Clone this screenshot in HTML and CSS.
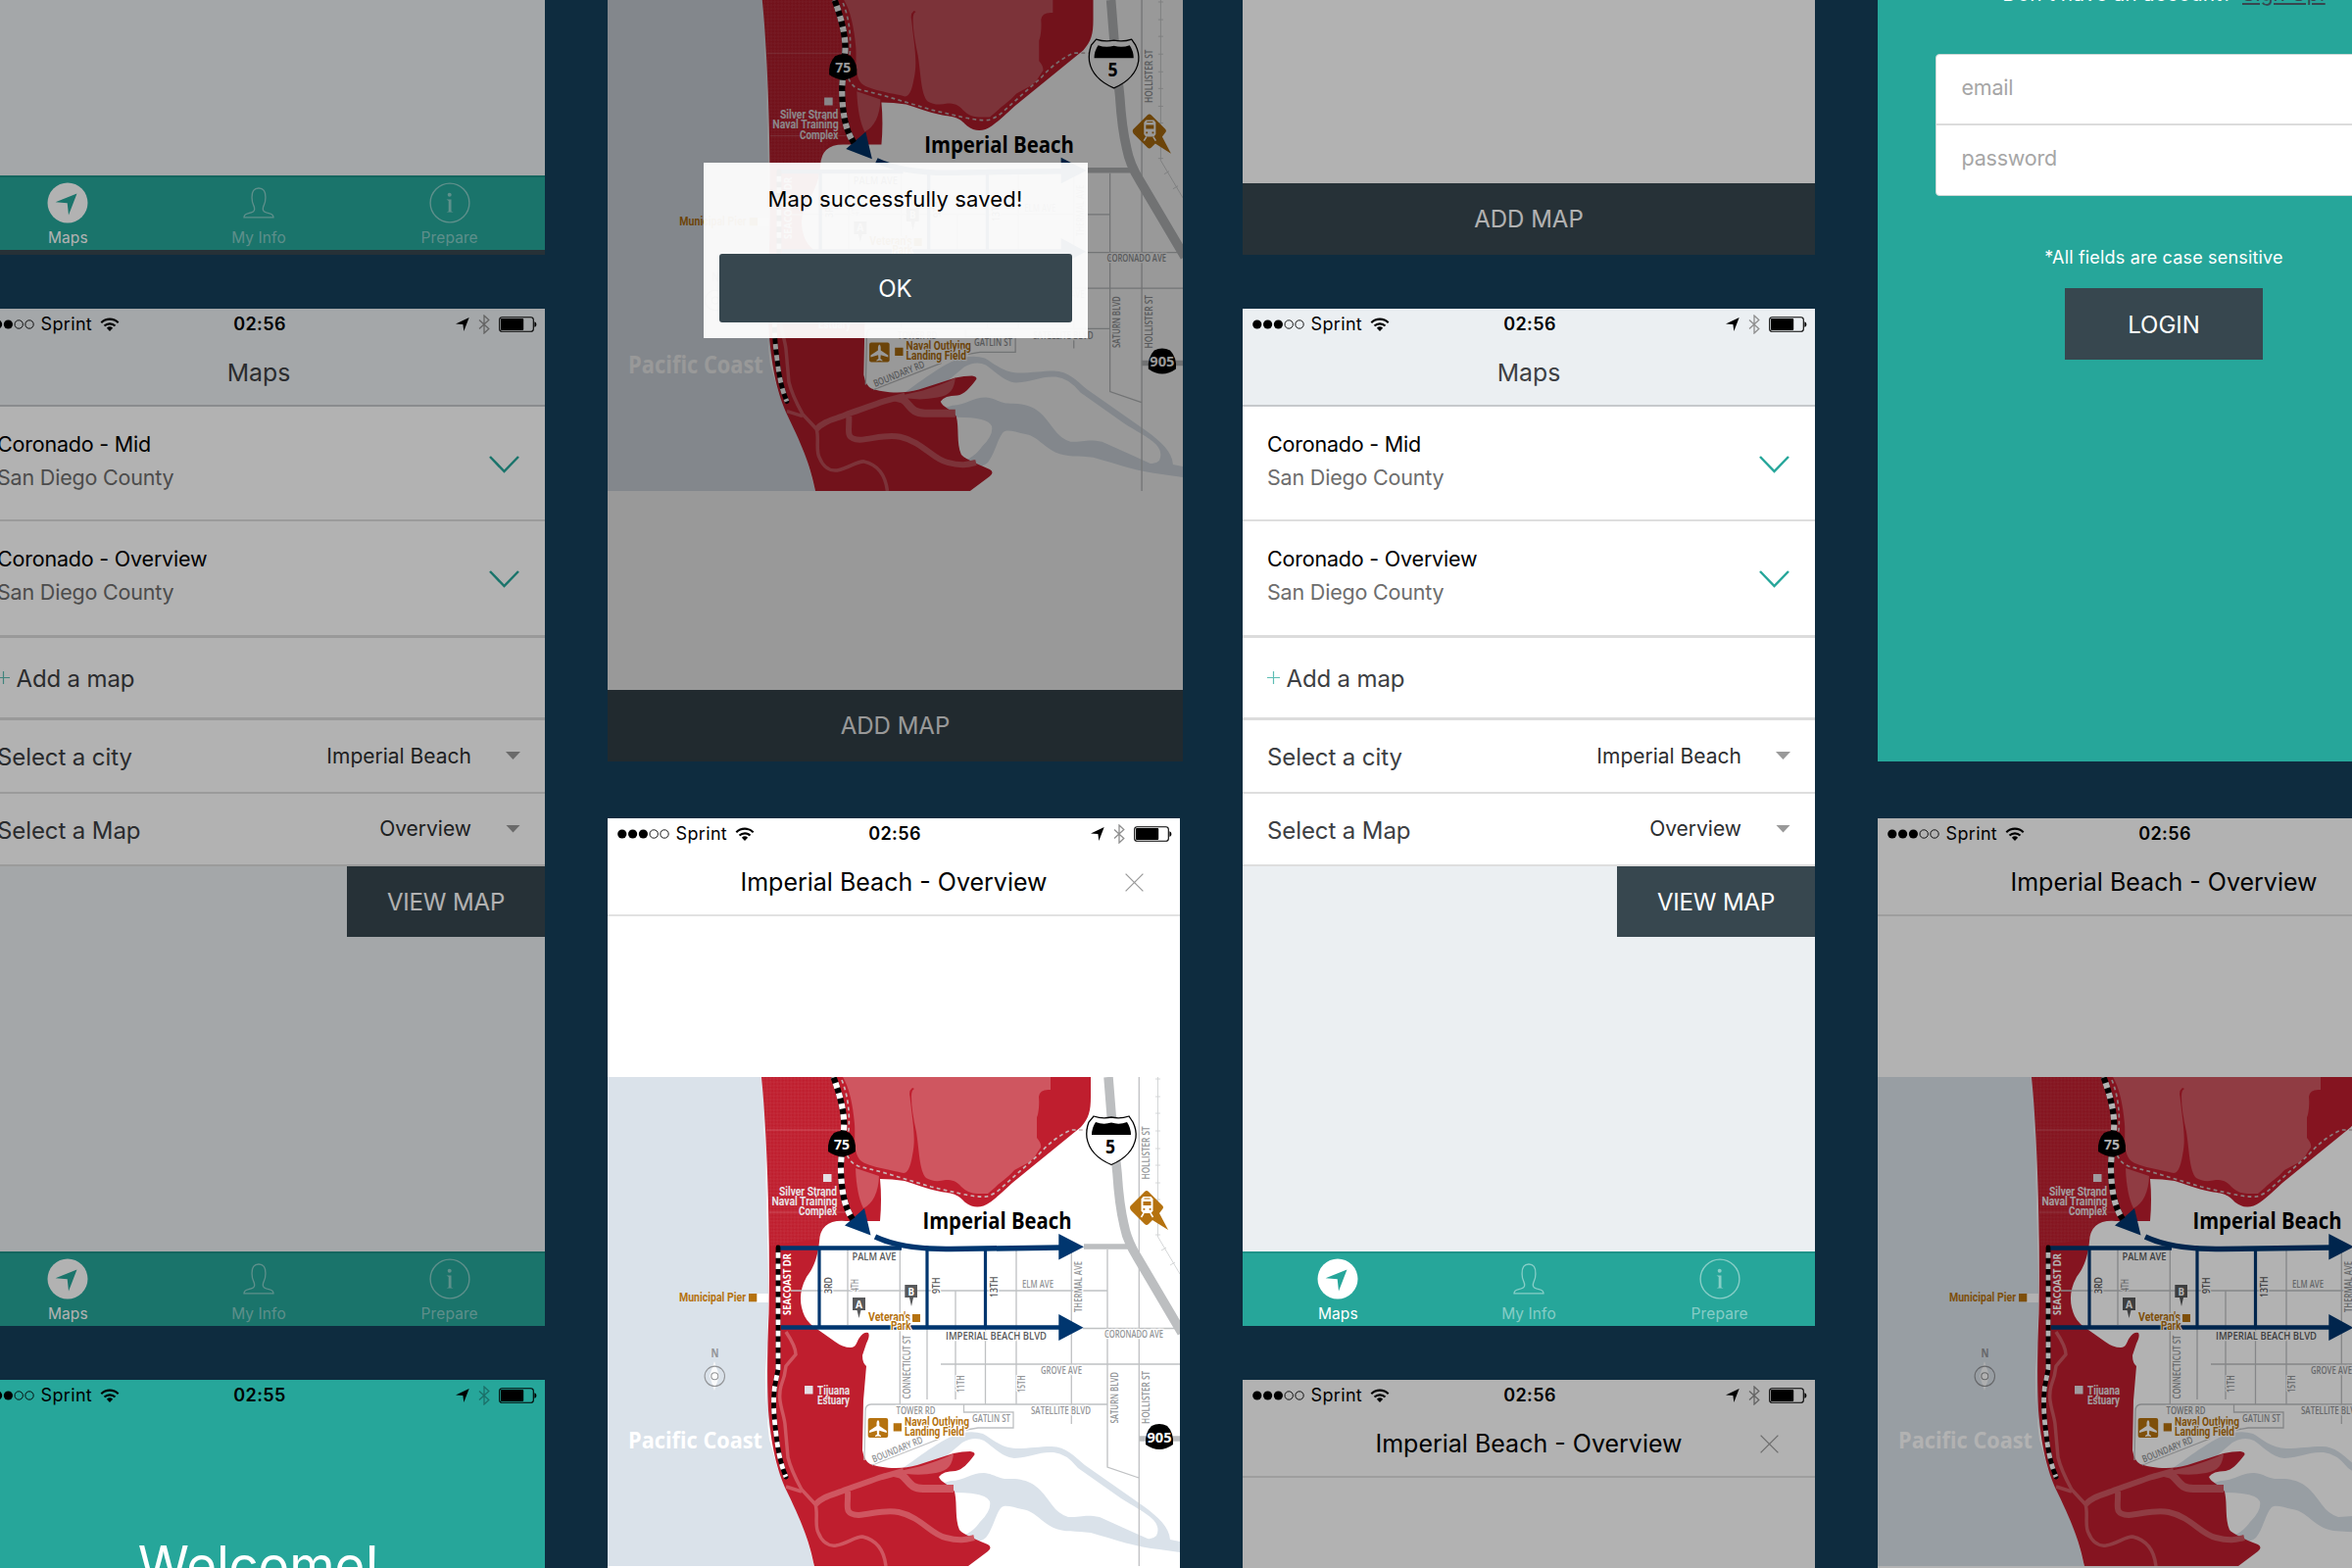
FILE: index.html
```html
<!DOCTYPE html>
<html lang="en">
<head>
<meta charset="utf-8">
<title>Beach Maps – screens</title>
<link rel="stylesheet" href="styles.css">
</head>
<body>
<svg class="defs" width="0" height="0" aria-hidden="true">
  <defs>
    <pattern id="hatch" width="5" height="5" patternUnits="userSpaceOnUse" patternTransform="rotate(45)"><rect width="2.5" height="2.5" fill="#fff" opacity=".06"/><rect x="2.5" y="2.5" width="2.5" height="2.5" fill="#fff" opacity=".06"/></pattern>
    <symbol id="i-dots" viewBox="0 0 54 10"><circle cx="4.8" cy="5" r="4.6"/><circle cx="15.6" cy="5" r="4.6"/><circle cx="26.4" cy="5" r="4.6"/><g fill="none" stroke="currentColor" stroke-width=".9"><circle cx="37.2" cy="5" r="4.2"/><circle cx="48" cy="5" r="4.2"/></g></symbol>
    <symbol id="i-wifi" viewBox="0 0 19 14"><g fill="none" stroke="currentColor" stroke-width="2.1"><path d="M.8 5.2a12.4 12.4 0 0 1 17.4 0"/><path d="M4 8.6a7.9 7.9 0 0 1 11 0"/></g><path d="M6.4 10.8a4.5 4.5 0 0 1 6.2 0L9.5 14z"/></symbol>
    <symbol id="i-arrow" viewBox="0 0 14 14"><path d="M13.7 0 8.3 14 7.4 6.9 0 6.5z"/></symbol>
    <symbol id="i-bt" viewBox="0 0 12 20"><path d="M1 5.6 10.8 14.4 6 19V1l4.800 4.600L1 14.400" fill="none" stroke="currentColor" stroke-width="1.3"/></symbol>
    <symbol id="i-batt" viewBox="0 0 39 16"><rect x=".7" y=".7" width="34.6" height="14.6" rx="2.6" fill="none" stroke="currentColor" stroke-width="1.1"/><rect x="2" y="2" width="23.2" height="12" rx="1"/><path d="M36.4 5.2c2.6.6 2.6 5 0 5.6z"/></symbol>
    <symbol id="i-chev" viewBox="0 0 31 18"><path d="M1 1 15.5 16 30 1" fill="none" stroke="#26a69a" stroke-width="2.5"/></symbol>
    <symbol id="i-plus" viewBox="0 0 13 13"><path d="M0 6.500h13M6.500 0v13" stroke="#5dbdb4" stroke-width="1.2"/></symbol>
    <symbol id="i-close" viewBox="0 0 19 19"><path d="M.6.6l17.8 17.8M18.400.6.6 18.400" stroke="#9b9b9b" stroke-width="1.3"/></symbol>
    <symbol id="i-maps" viewBox="0 0 42 42"><circle cx="21" cy="21" r="20.5" fill="#fff"/><path d="M30.5 11.5 22 33.5 20.7 21.3 8.6 20.2z" fill="#26a69a"/></symbol>
    <symbol id="i-user" viewBox="0 0 32 32"><path d="M1 30.8c.1-2.500 1.400-3.600 4.600-4.200 3.700-.7 5.600-1.600 6-3.500.2-1.800 0-3-.8-4.500-1.200-2.200-1.700-4.400-1.700-7.600C8.800 4.200 11.300 1 16 1s7.200 3.200 6.900 10c0 3.200-.5 5.400-1.700 7.600-.8 1.500-1 2.700-.8 4.500.4 1.900 2.300 2.800 6 3.500 3.200.6 4.500 1.700 4.600 4.200z" fill="none" stroke="currentColor" stroke-width="1.3"/></symbol>
    <symbol id="i-info" viewBox="0 0 42 42"><circle cx="21" cy="21" r="19.9" fill="none" stroke="currentColor" stroke-width="1.4"/><circle cx="20.7" cy="12.8" r="2"/><path d="M17.5 17.500h5v12l2.100 1h-7l2.100-1V19z"/></symbol>

    <symbol id="map" viewBox="0 0 584 499" preserveAspectRatio="none">
      <rect width="584" height="499" fill="#fff"/>
      <path fill="#dae2ea" d="M0 0h160L165 204V328L211 499H0z"/>
      <path fill="#fff" d="M155 0C161 54 163 124 165 204V241L161 300Q160 345 169 375L175 404 165 370Q161 340 162 300L164 241V204L162 124 160 54z"/>
      <path fill="#fff" d="M152 221h14v9h-14z"/>
      <path fill="#dae2ea" d="M300 400C320 386 345 366 363 363Q374 361 383 364C392 369 402 379 417 379C432 379 440 377 453 377C468 377 476 387 487 396L547 438C562 449 573 459 574 472L584 474V485L563 482C540 480 518 472 493 465C478 463 466 465 455 460C440 452 436 443 423 441C414 439 406 436 402 439C396 445 393 462 386 470Q378 477 363 473L355 470C368 468 376 460 380 454Q392 442 390 433Q386 424 355 424L330 418 350 412C364 412 370 404 384 404C396 405 398 411 412 410C436 410 444 424 453 436Q460 446 470 449C484 449 488 446 502 449L533 463 551 471Q556 472 560 468Q564 460 557 452C548 443 536 438 524 430L480 399Q468 384 455 383C440 382 432 388 415 389C402 388 392 376 384 371Q374 366 362 373L330 400z"/>
      <path fill="#bf1e2e" d="M157 0H493V20C493 35 491 42 483 51L413 108Q396 124 390 128Q377 137 365 128C358 121 356 119 340 117C325 114 313 109 303 106Q290 104 278 104Q280 125 278 147H243Q217 145 216 168C214 190 206 200 203 204Q192 224 201 244Q205 252 215 258L232 270Q240 276 248 276C254 276 254 270 257 266Q261 260 266 261Q268 264 264 272L260 284Q260 292 264 295L261 330 260 381Q262 392 268 395C278 399 300 401 316 396L353 384Q362 382 370 382Q376 383 374 386C368 394 362 401 355 402Q342 402 338 408C340 414 350 416 354 423C357 435 354 450 359 462Q361 466 388 477Q393 480 388 484L368 499H211C206 475 200 458 183 423C172 400 167 375 164 340Q162 300 164.500 241C166 160 163 60 157 0z"/>
      <path fill="url(#hatch)" d="M157 0H233L240 50 238 84 243 130 222 149 216 165 166 172 163 90z"/>
      <g fill="#cf5660">
        <path d="M240 0H452V13Q441 12 440 20C441 30 439 40 438 41L438 62Q443 68 442 72C436 80 436 83 430 87L415 95C407 104 402 106 395 113L388 119H377Q368 119 361 112C356 106 352 105 345 105Q333 108 325 103C318 96 318 74 315 56Q310 34 310 20 310 13 313 12L311 11Q307 14 308.500 20C311 45 315 62 311 80Q308 98 302 98C290 95 262 91 257 84C250 74 253 60 252 48Q249 15 240 0z"/>
        <path d="M253 93 277 101Q276 126 261 134Q254 120 253 93z"/>
        <path d="M280 405Q300 402 320 397 345 389 353 384C352 395 348 402 335 404Q320 407 305 405L300 410z"/>
      </g>
      <g fill="none" stroke="#cf5660" stroke-width="3.5">
        <path d="M182 260Q192 275 192 283L182 295Q181 305 177 315C173 330 179 340 181 354L184 388Q187 401 198 421L212 436C215 445 211 458 215 465 219 475 226 479 233 478 245 476 252 469 260 469 273 472 282 482 284 499"/>
        <path d="M182 418 198 423"/>
        <path stroke-width="6" d="M211 437C220 427 232 426 243 421 258 416 268 412 280 408L302 402"/>
        <path stroke-width="8" d="M300 406C308 412 308 420 322 420H353"/>
        <path stroke-width="6" d="M245 423C246 438 240 446 256 447 270 446 283 441 297 444 320 449 330 467 345 470 360 474 366 472 374 470"/>
      </g>
      <path d="M162 54h76M165 138h77" stroke="#fff" stroke-width=".8" opacity=".25"/>
      <path fill="none" stroke="#c9b6b8" stroke-width="1.7" stroke-dasharray="3.8 3.3" d="M239 3Q248 26 246 54L243 76Q247 88 256 91L280 97 330 112 360 119Q378 123 387 122 396 119 402 113L440 79Q455 62 473 54H490"/>
      <!-- street grid -->
      <g fill="none" stroke="#bfc1c3" stroke-width="1.3">
        <path d="M542.300 0V499M510 176V398L542 409M473.300 176V354M187 218H510M245 176V253M298.300 176V334M355 218V329M417 176V334M326 256V329M385.500 256V334M340 293H584M485 256.500H584M510 334H269Q263 334 263 341L262 391M363.500 334V342H414V358H378L366 360M339 369 270 396"/>
        <path d="M561.500 0V163L584 201M559 2h5M559 20h5M559 37h5M559 55h5M559 73h5M559 90h5M559 108h5M559 125h5M559 161h5M565 177l5-3M574 192l5-3" stroke-width=".9" stroke="#cfd1d3"/>
      </g>
      <path d="M486 173H532M542 369H584" stroke="#bcbec0" stroke-width="5.5"/>
      <path d="M511 0 515 50 520 98Q522 130 527 151 530 167 540 183L586 261" fill="none" stroke="#bcbec0" stroke-width="9.5"/>
      <!-- highlighted route -->
      <g fill="none" stroke="#00366f">
        <path d="M216 176V256M326 176V256M385.500 176V256" stroke-width="3.2"/>
        <path d="M176 174.500H300M177 255.500H464" stroke-width="4.3"/>
        <path d="M273 163C290 171 315 176 350 175.500L462 174" stroke-width="5.5"/>
      </g>
      <path fill="#00366f" d="M262 134 268.500 161.500 242 151.500zM460.300 160 486 173.300 460.300 186.500zM460.300 242 485.500 255.700 460.300 269z"/>
      <g fill="none">
        <path d="M230.500 0Q245 40 240 60L238 90Q238 128 250 145" stroke="#000" stroke-width="6.2"/>
        <path d="M230.500 0Q245 40 240 60L238 90Q238 128 250 145" stroke="#fff" stroke-width="6.2" stroke-dasharray="5.5 5.5" stroke-dashoffset="-6"/>
        <path d="M174 174V298L170.500 316Q168 335 172 365 175 392 182 408" stroke="#000" stroke-width="4.8" stroke-linecap="round"/>
        <path d="M174 174V298L170.500 316Q168 335 172 365 175 392 182 408" stroke="#fff" stroke-width="4.8" stroke-dasharray="5.7 5.7" stroke-dashoffset="-5"/>
      </g>
      <!-- highway shields -->
      <path d="M231 57Q239 53 247 57 254 64 253 76 246 81 239 81 232 81 225 76 224 64 231 57z"/>
      <path d="M555 356Q563 352 571 356 578 363 577 375 570 380 563 380 556 380 549 375 548 363 555 356z"/>
      <path d="M496 40Q505 43 514 41 523 43 532 40L536 46Q540 54 539 62 536 80 514 89.500 492 80 489 62 488 54 491 46z" fill="#fff" stroke="#000" stroke-width="1.3"/>
      <path d="M498 46Q506 49 514 46.500 522 49 530 46 534 52 534 59H494Q494 52 498 46z"/>
      <!-- landmarks -->
      <path fill="#e5dfe4" d="M220 99h8.500v8h-8.500zM201 315h8.500v8.500h-8.500z"/>
      <path fill="#b5720f" d="M144 221h8.300v8.300H144zM311 242h8v8h-8zM291.700 353.300h8.300v8.300h-8.300z"/>
      <path fill="#b5720f" d="M548 117q2-2 4 0l14 14q2 2 0 4l-3 4 9 17-16-10-4 4q-2 2-4 0l-14-14q-2-3 0-5z"/>
      <path fill="#fff" d="M546.500 122h8l2 2.500v12l-2 2.500h-8l-2-2.500v-12z"/><path fill="#b5720f" d="M546.500 127h8v4h-8zM546.500 134h1.800v1.800h-1.800zM552.700 134h1.800v1.800h-1.800zM547.500 123.500h6v1h-6z"/><path d="M547 139l-2.500 4M554 139l2.500 4" stroke="#fff" stroke-width="1.6"/>
      <rect x="265.7" y="348" width="20.5" height="20" rx="2" fill="#b5720f"/>
      <path fill="#fff" d="M276 350q1.300 1 1.300 3v3l7.500 5v2l-7.500-2.300-.3 3.800 2 1.600v1l-3-.7-3 .7v-1l2-1.600-.3-3.800L267 363v-2l7.500-5v-3q0-2 1.500-3z"/>
      <path fill="#58595b" d="M250 225h13v13h-4.500L256.500 246l-2-8H250zM303.300 212h12.700v13h-4L310 234l-2-9h-4.700z"/>
      <path fill="#fff" d="M109 290l5 15-5 15-5-15z" opacity=".85"/>
      <g fill="none" stroke="#939598" stroke-width="1.1"><circle cx="109.3" cy="305.3" r="10.2"/><circle cx="109.3" cy="305.3" r="3.5" fill="#fff"/></g>
      <g class="m-bold m-white" font-size="12">
        <text x="231" y="74" textLength="16" lengthAdjust="spacingAndGlyphs" font-size="14">75</text>
        <text x="550.5" y="373" textLength="25" lengthAdjust="spacingAndGlyphs" font-size="13.5">905</text>
        <text x="21" y="379" textLength="137" lengthAdjust="spacingAndGlyphs" font-size="24">Pacific Coast</text>
        <text transform="translate(187 243)rotate(-90)" textLength="63" lengthAdjust="spacingAndGlyphs" font-size="10.5">SEACOAST DR</text>
        <text x="253" y="235.5" textLength="7" lengthAdjust="spacingAndGlyphs" font-size="10">A</text>
        <text x="306.5" y="222.5" textLength="6.5" lengthAdjust="spacingAndGlyphs" font-size="10">B</text>
      </g>
      <g class="m-din" fill="#e8e2e6" font-size="12">
        <text x="175" y="120.5" textLength="59" lengthAdjust="spacingAndGlyphs">Silver Strand</text>
        <text x="167.5" y="130.8" textLength="67" lengthAdjust="spacingAndGlyphs">Naval Training</text>
        <text x="195" y="141" textLength="39" lengthAdjust="spacingAndGlyphs">Complex</text>
        <text x="214" y="323.5" textLength="33" lengthAdjust="spacingAndGlyphs">Tijuana</text>
        <text x="214" y="333.8" textLength="33" lengthAdjust="spacingAndGlyphs">Estuary</text>
      </g>
      <g class="m-din m-halo" fill="#b5720f" font-size="12">
        <text x="73" y="229" textLength="68" lengthAdjust="spacingAndGlyphs" stroke="none" class="m-plain">Municipal Pier</text>
        <text x="266" y="248.7" textLength="43" lengthAdjust="spacingAndGlyphs">Veteran's</text>
        <text x="289" y="258" textLength="20.5" lengthAdjust="spacingAndGlyphs">Park</text>
        <text x="303" y="355.7" textLength="66" lengthAdjust="spacingAndGlyphs">Naval Outlying</text>
        <text x="303" y="366" textLength="61" lengthAdjust="spacingAndGlyphs">Landing Field</text>
      </g>
      <g class="m-bold">
        <text x="321.5" y="155" textLength="152" lengthAdjust="spacingAndGlyphs" font-size="22.5">Imperial Beach</text>
        <text x="508" y="77.8" textLength="10" lengthAdjust="spacingAndGlyphs" font-size="19">5</text>
      </g>
      <g class="m-street m-halo" fill="#58595b" font-size="10.5">
        <text x="249.5" y="187" textLength="45" lengthAdjust="spacingAndGlyphs">PALM AVE</text>
        <text x="345" y="268" textLength="103" lengthAdjust="spacingAndGlyphs">IMPERIAL BEACH BLVD</text>
        <text transform="translate(228.700 221)rotate(-90)" textLength="17" lengthAdjust="spacingAndGlyphs">3RD</text>
        <text transform="translate(338.500 221)rotate(-90)" textLength="16.5" lengthAdjust="spacingAndGlyphs">9TH</text>
        <text transform="translate(398 225)rotate(-90)" textLength="21.5" lengthAdjust="spacingAndGlyphs">13TH</text>
      </g>
      <g class="m-street m-halo" fill="#939598" font-size="10">
        <text transform="translate(255.500 219)rotate(-90)" textLength="13" lengthAdjust="spacingAndGlyphs">4TH</text>
        <text x="423" y="214.7" textLength="32" lengthAdjust="spacingAndGlyphs">ELM AVE</text>
        <text x="507" y="266.3" textLength="60" lengthAdjust="spacingAndGlyphs">CORONADO AVE</text>
        <text x="442" y="302.5" textLength="42" lengthAdjust="spacingAndGlyphs">GROVE AVE</text>
        <text x="294.5" y="344.3" textLength="40" lengthAdjust="spacingAndGlyphs">TOWER RD</text>
        <text x="432" y="344.3" textLength="61" lengthAdjust="spacingAndGlyphs">SATELLITE BLVD</text>
        <text x="372" y="352" textLength="39" lengthAdjust="spacingAndGlyphs">GATLIN ST</text>
        <text transform="translate(484 240)rotate(-90)" textLength="52" lengthAdjust="spacingAndGlyphs">THERMAL AVE</text>
        <text transform="translate(553.300 104.500)rotate(-90)" textLength="54" lengthAdjust="spacingAndGlyphs">HOLLISTER ST</text>
        <text transform="translate(553.300 354)rotate(-90)" textLength="54" lengthAdjust="spacingAndGlyphs">HOLLISTER ST</text>
        <text transform="translate(520.700 353.500)rotate(-90)" textLength="52.5" lengthAdjust="spacingAndGlyphs">SATURN BLVD</text>
        <text transform="translate(309.300 328.500)rotate(-90)" textLength="65" lengthAdjust="spacingAndGlyphs">CONNECTICUT ST</text>
        <text transform="translate(364 322)rotate(-90)" textLength="17.5" lengthAdjust="spacingAndGlyphs">11TH</text>
        <text transform="translate(426.300 322)rotate(-90)" textLength="17.5" lengthAdjust="spacingAndGlyphs">15TH</text>
        <text transform="translate(271.500 393.500)rotate(-22)" textLength="55" lengthAdjust="spacingAndGlyphs">BOUNDARY RD</text>
      </g>
      <text class="m-bold" x="105.5" y="285.7" font-size="11.5" fill="#939598" textLength="8" lengthAdjust="spacingAndGlyphs">N</text>
    </symbol>
  </defs>
</svg>

<main class="board">
  <section class="column">
    <article class="screen dim peek peek-tabs">
      <nav class="tabs">
        <a class="tab active"><svg class="tab-icon"><use href="#i-maps"/></svg><span>Maps</span></a>
        <a class="tab"><svg class="tab-icon user"><use href="#i-user"/></svg><span>My Info</span></a>
        <a class="tab"><svg class="tab-icon"><use href="#i-info"/></svg><span>Prepare</span></a>
      </nav>
    </article>
    <article class="screen full maps dim">
      <div class="status"><div class="st-left"><svg class="dots"><use href="#i-dots"/></svg><span class="carrier">Sprint</span><svg class="wifi"><use href="#i-wifi"/></svg></div><b class="clock">02:56</b><div class="st-right"><svg class="loc"><use href="#i-arrow"/></svg><svg class="bt"><use href="#i-bt"/></svg><svg class="batt"><use href="#i-batt"/></svg></div></div>
      <header class="nav-title">Maps</header>
      <div class="map-row"><div><h3>Coronado - Mid</h3><p>San Diego County</p></div><svg class="chev"><use href="#i-chev"/></svg></div>
      <div class="map-row last"><div><h3>Coronado - Overview</h3><p>San Diego County</p></div><svg class="chev"><use href="#i-chev"/></svg></div>
      <div class="add-row"><svg class="plus"><use href="#i-plus"/></svg><span>Add a map</span></div>
      <div class="select-row"><label>Select a city</label><span class="value">Imperial Beach</span><i class="caret"></i></div>
      <div class="select-row second"><label>Select a Map</label><span class="value">Overview</span><i class="caret"></i></div>
      <button class="view-btn">VIEW MAP</button>
      <nav class="tabs">
        <a class="tab active"><svg class="tab-icon"><use href="#i-maps"/></svg><span>Maps</span></a>
        <a class="tab"><svg class="tab-icon user"><use href="#i-user"/></svg><span>My Info</span></a>
        <a class="tab"><svg class="tab-icon"><use href="#i-info"/></svg><span>Prepare</span></a>
      </nav>
    </article>
    <article class="screen full welcome">
      <div class="status"><div class="st-left"><svg class="dots"><use href="#i-dots"/></svg><span class="carrier">Sprint</span><svg class="wifi"><use href="#i-wifi"/></svg></div><b class="clock">02:55</b><div class="st-right"><svg class="loc"><use href="#i-arrow"/></svg><svg class="bt"><use href="#i-bt"/></svg><svg class="batt"><use href="#i-batt"/></svg></div></div>
      <h1>Welcome!</h1>
    </article>
  </section>

  <section class="column wide-gap">
    <article class="screen saved">
      <svg class="map-pic"><use href="#map"/></svg>
      <button class="add-btn">ADD MAP</button>
      <div class="backdrop">
        <div class="dialog"><p>Map successfully saved!</p><button class="ok-btn">OK</button></div>
      </div>
    </article>
    <article class="screen full">
      <div class="status"><div class="st-left"><svg class="dots"><use href="#i-dots"/></svg><span class="carrier">Sprint</span><svg class="wifi"><use href="#i-wifi"/></svg></div><b class="clock">02:56</b><div class="st-right"><svg class="loc"><use href="#i-arrow"/></svg><svg class="bt"><use href="#i-bt"/></svg><svg class="batt"><use href="#i-batt"/></svg></div></div>
      <header class="map-title"><span>Imperial Beach - Overview</span><svg class="close"><use href="#i-close"/></svg></header>
      <div class="spacer"></div>
      <svg class="map-pic"><use href="#map"/></svg>
    </article>
  </section>

  <section class="column">
    <article class="screen dim peek"><button class="add-btn">ADD MAP</button></article>
    <article class="screen full maps">
      <div class="status"><div class="st-left"><svg class="dots"><use href="#i-dots"/></svg><span class="carrier">Sprint</span><svg class="wifi"><use href="#i-wifi"/></svg></div><b class="clock">02:56</b><div class="st-right"><svg class="loc"><use href="#i-arrow"/></svg><svg class="bt"><use href="#i-bt"/></svg><svg class="batt"><use href="#i-batt"/></svg></div></div>
      <header class="nav-title">Maps</header>
      <div class="map-row"><div><h3>Coronado - Mid</h3><p>San Diego County</p></div><svg class="chev"><use href="#i-chev"/></svg></div>
      <div class="map-row last"><div><h3>Coronado - Overview</h3><p>San Diego County</p></div><svg class="chev"><use href="#i-chev"/></svg></div>
      <div class="add-row"><svg class="plus"><use href="#i-plus"/></svg><span>Add a map</span></div>
      <div class="select-row"><label>Select a city</label><span class="value">Imperial Beach</span><i class="caret"></i></div>
      <div class="select-row second"><label>Select a Map</label><span class="value">Overview</span><i class="caret"></i></div>
      <button class="view-btn">VIEW MAP</button>
      <nav class="tabs">
        <a class="tab active"><svg class="tab-icon"><use href="#i-maps"/></svg><span>Maps</span></a>
        <a class="tab"><svg class="tab-icon user"><use href="#i-user"/></svg><span>My Info</span></a>
        <a class="tab"><svg class="tab-icon"><use href="#i-info"/></svg><span>Prepare</span></a>
      </nav>
    </article>
    <article class="screen full dim">
      <div class="status"><div class="st-left"><svg class="dots"><use href="#i-dots"/></svg><span class="carrier">Sprint</span><svg class="wifi"><use href="#i-wifi"/></svg></div><b class="clock">02:56</b><div class="st-right"><svg class="loc"><use href="#i-arrow"/></svg><svg class="bt"><use href="#i-bt"/></svg><svg class="batt"><use href="#i-batt"/></svg></div></div>
      <header class="map-title"><span>Imperial Beach - Overview</span><svg class="close"><use href="#i-close"/></svg></header>
    </article>
  </section>

  <section class="column wide-gap">
    <article class="screen login">
      <p class="signup"><span>Don't have an account?</span><a>Sign Up!</a></p>
      <div class="fields"><div class="field f-email">email</div><div class="field f-pass">password</div></div>
      <p class="note">*All fields are case sensitive</p>
      <button class="login-btn">LOGIN</button>
    </article>
    <article class="screen full dim">
      <div class="status"><div class="st-left"><svg class="dots"><use href="#i-dots"/></svg><span class="carrier">Sprint</span><svg class="wifi"><use href="#i-wifi"/></svg></div><b class="clock">02:56</b><div class="st-right"><svg class="loc"><use href="#i-arrow"/></svg><svg class="bt"><use href="#i-bt"/></svg><svg class="batt"><use href="#i-batt"/></svg></div></div>
      <header class="map-title"><span>Imperial Beach - Overview</span><svg class="close"><use href="#i-close"/></svg></header>
      <div class="spacer"></div>
      <svg class="map-pic"><use href="#map"/></svg>
    </article>
  </section>
</main>
</body>
</html>
```
FILE: styles.css
```css
* { box-sizing: border-box; }
body { margin: 0; background: #0e2c3f; font-family: Inter, "Open Sans", sans-serif; color: #000; }
h1, h3, p { margin: 0; font-weight: 400; }
button { border: 0; border-radius: 0; font: inherit; background: #37474f; color: #fff; padding: 0; font-size: 24px; }
svg { display: block; fill: currentColor; flex: none; }
.defs { position: absolute; }

.board { width: 2400px; height: 1600px; overflow: hidden; display: flex; gap: 64px; }
.column { flex: none; width: 584px; display: flex; flex-direction: column; gap: 55px; }
.column:first-child { margin-left: -28px; }
.column.wide-gap { gap: 58px; }

.screen { position: relative; flex: none; background: #fff; display: flex; flex-direction: column; }
.screen.full { height: 1038px; }
.dim::after { content: ""; position: absolute; inset: 0; background: rgba(0, 0, 0, .3); }
.maps { background: #ebeff2; }
.peek { height: 260px; justify-content: flex-end; }
.peek-tabs { background: #ebeff2; border-bottom: 5px solid #37474f; }
.peek-tabs::after { bottom: -5px; }

/* iOS status bar */
.status { height: 32px; flex: none; display: grid; grid-template-columns: 1fr auto 1fr; align-items: center; padding: 0 8px 0 10px; font-size: 18px; line-height: 32px; }
.st-left, .st-right { display: flex; align-items: center; }
.st-right { justify-content: flex-end; }
.dots { width: 54px; height: 10px; }
.carrier { width: 52px; margin: 0 8px 0 5.500px; letter-spacing: .35px; }
.wifi { width: 20px; height: 14px; }
.clock { font-weight: 600; font-size: 18px; letter-spacing: .4px; }
.loc { width: 14px; height: 14px; }
.bt { width: 12px; height: 20px; margin: 0 9px 0 9px; color: #8e8e8e; }
.batt { width: 39px; height: 16px; }

.nav-title { height: 68px; flex: none; border-bottom: 2px solid #c6c9cc; text-align: center; font-size: 24.800px; line-height: 66px; color: #3d4043; }
.map-title { height: 68px; flex: none; border-bottom: 2px solid #e2e2e2; display: grid; grid-template-columns: 1fr auto 1fr; align-items: center; padding-right: 37px; padding-left: 37px; font-size: 25px; line-height: 66px; }
.map-title span { grid-column: 2; }
.close { width: 19px; height: 19px; justify-self: end; }
.spacer { height: 164px; flex: none; }
.map-pic { width: 584px; height: 499px; }

/* map list */
.map-row { height: 117px; flex: none; background: #fff; border-bottom: 2px solid #dedede; display: flex; justify-content: space-between; padding: 21px 26px 0 25px; font-size: 21.500px; line-height: 34px; letter-spacing: -.2px; }
.map-row.last { height: 119px; border-bottom: 3px solid #dcdcdc; }
.map-row h3 { font-size: inherit; }
.map-row p { color: #6d6d6d; }
.chev { width: 31px; height: 18px; margin-top: 29px; }
.add-row { height: 84px; flex: none; background: #fff; border-bottom: 3px solid #dcdcdc; display: flex; align-items: center; gap: 6.500px; padding: 1px 25px 0; font-size: 24px; letter-spacing: -.15px; color: #3d4043; }
.plus { width: 13px; height: 13px; margin-top: -2px; }
.select-row { height: 75px; flex: none; background: #fff; border-bottom: 2px solid #dedede; display: flex; align-items: center; padding: 0 25px 1px; font-size: 24px; letter-spacing: -.1px; color: #3d4043; }
.select-row.second { height: 74px; }
.select-row label { padding-top: 3px; }
.value { margin-left: auto; margin-right: 35px; font-size: 21px; letter-spacing: 0; color: #2c2e30; }
.caret { width: 15px; height: 8px; background: #999; clip-path: polygon(0 0, 100% 0, 50% 100%); }
.view-btn { width: 202px; height: 72px; align-self: flex-end; flex: none; letter-spacing: -.15px; }

.tabs { height: 76px; flex: none; margin-top: auto; background: #26a69a; border-top: 2px solid #1f9389; display: flex; }
.tab { flex: 1; display: flex; flex-direction: column; align-items: center; padding-top: 5px; color: rgba(255, 255, 255, .45); font-size: 15.500px; letter-spacing: .1px; line-height: 20px; }
.tab.active { color: #fff; }
.tab-icon { width: 42px; height: 42px; margin-bottom: 4.500px; }
.tab-icon.user { width: 32px; height: 32px; margin: 5px 0 9.500px; }

.welcome { background: #26a69a; color: #000; }
.welcome .bt { color: #1b6f68; }
.welcome h1 { color: #fff; text-align: center; font-size: 53px; line-height: 64px; margin-top: 125px; letter-spacing: -.2px; }

/* saved dialog */
.saved { width: 587px; height: 777px; }
.saved .map-pic { width: 587px; height: 501px; }
.add-btn { height: 73px; width: 100%; flex: none; margin-top: auto; }
.backdrop { position: absolute; inset: 0; background: rgba(0, 0, 0, .4); display: flex; flex-direction: column; align-items: center; padding-top: 166px; }
.dialog { width: 392px; height: 179px; background: rgba(255, 255, 255, .94); padding: 19px 16px 16px; display: flex; flex-direction: column; justify-content: space-between; align-items: center; }
.dialog p { font-size: 22px; line-height: 36px; letter-spacing: .15px; }
.ok-btn { width: 360px; height: 70px; border-radius: 3px; flex: none; }

/* login */
.login { height: 777px; background: #26a69a; align-items: center; overflow: hidden; }
.signup { display: flex; gap: 10px; height: 56px; flex: none; color: #fff; font-size: 21px; line-height: 24px; margin-top: -18px; letter-spacing: .05px; }
.signup a { color: #37474f; text-decoration: underline; }
.fields { width: 467px; height: 145px; flex: none; margin-top: 17px; background: #fff; border: 1px solid #cfd8d6; border-radius: 4px; }
.field { height: 72px; padding-left: 26px; font-size: 21.500px; letter-spacing: -.2px; line-height: 67px; color: #a6a6a6; }
.f-email { border-bottom: 2px solid #dcdcdc; }
.note { color: #fff; font-size: 18px; line-height: 24px; margin-top: 51px; letter-spacing: .18px; }
.login-btn { width: 202px; height: 73px; margin-top: 19px; padding-top: 2px; }

/* map lettering */
.m-bold { font-family: "Open Sans", sans-serif; font-weight: 700; }
.m-white { fill: #fff; }
.m-din { font-family: Roboto, sans-serif; font-weight: 700; }
.m-street { font-family: "Open Sans", sans-serif; font-weight: 600; }
.m-halo { paint-order: stroke; stroke: #fff; stroke-width: 2.500px; }
.m-plain { stroke: none; }
```
